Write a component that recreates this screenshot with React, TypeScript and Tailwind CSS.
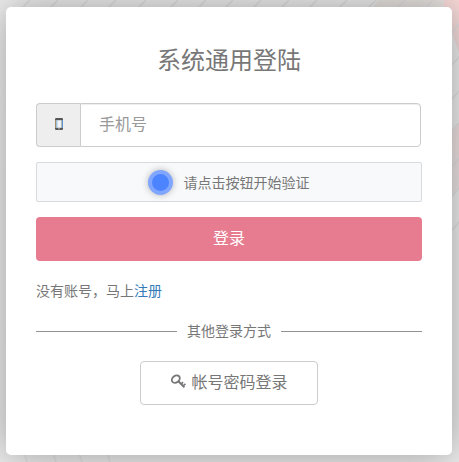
import { useState } from 'react';
import type { FormEvent } from 'react';

function PhoneIcon() {
  return (
    <svg width="8" height="12" viewBox="0 0 8 12" aria-hidden="true">
      <rect x="0" y="0" width="8" height="12" rx="1.2" fill="#555555" />
      <rect x="0" y="2" width="1.2" height="8" fill="#a58a68" />
      <rect x="6.8" y="2" width="1.2" height="8" fill="#5a94c8" />
      <rect x="1.4" y="2.2" width="5.2" height="7.6" fill="#f1f3f5" />
      <rect x="1.4" y="2.2" width="1" height="7.6" fill="#8fc6f0" />
      <rect x="3.2" y="10.4" width="1.6" height="0.9" fill="#cccccc" />
    </svg>
  );
}

function KeyIcon() {
  return (
    <svg width="16" height="15" viewBox="0 0 16 15" fill="none" stroke="#777777" aria-hidden="true">
      <ellipse cx="5.8" cy="5.1" rx="4.3" ry="3.3" transform="rotate(-38 5.8 5.1)" strokeWidth="1.9" />
      <path d="M8.4 7.3L14.4 13.4" strokeWidth="2" />
      <path d="M13 12L15.4 9.8M11 10.2L13.1 8.2" strokeWidth="1.6" />
    </svg>
  );
}

// Diagonal pattern behind the card
function Backdrop() {
  return (
    <svg
      className="absolute inset-0 h-full w-full"
      viewBox="0 0 459 462"
      preserveAspectRatio="none"
      aria-hidden="true"
    >
      <defs>
        <linearGradient id="tone" x1="0" y1="0" x2="0" y2="1">
          <stop offset="0" stopColor="#efefef" />
          <stop offset="1" stopColor="#ececec" />
        </linearGradient>
        <linearGradient id="rose" x1="0" y1="0" x2="0" y2="1">
          <stop offset="0" stopColor="#fbdcda" />
          <stop offset="1" stopColor="#f0dedd" />
        </linearGradient>
        <linearGradient id="blush" x1="0" y1="0" x2="0" y2="1">
          <stop offset="0" stopColor="#efe1e1" />
          <stop offset="1" stopColor="#ebe5e5" />
        </linearGradient>
      </defs>
      <rect width="459" height="462" fill="url(#tone)" />
      <path d="M378 0H446V7H373Z" fill="#ebe6e3" />
      <path d="M444 0H459V53L452 33L444 7Z" fill="url(#rose)" />
      <path d="M452 132L459 123V188L452 195Z" fill="url(#blush)" />
      <g stroke="#e2e0e0" strokeWidth="1.5">
        <path d="M30 0L20 10M58 0L48 10M88 0L78 10M116 0L106 10M146 0L136 10M178 0L168 10M206 0L196 10M233 0L223 10M261 0L251 10M289 0L279 10M317 0L307 10M347 0L337 10M376 0L366 10M405 0L395 10M433 0L423 10" />
        <path d="M450 35L459 24M450 67L459 57M450 101L459 91M450 132L459 123M450 169L459 158M450 199L459 188M450 233L459 222" />
        <path d="M24 453L27 462M53 453L56 462M79 453L82 462M107 453L110 462" />
      </g>
    </svg>
  );
}

export default function App() {
  const [phone, setPhone] = useState('');

  const handleSubmit = (e: FormEvent) => {
    e.preventDefault();
  };

  return (
    <div className="relative h-[462px] w-[459px] overflow-hidden bg-[#eeeeee] pt-[7px] pl-[6px] font-['Noto_Sans_CJK_SC',sans-serif] text-sm text-[#777777]">
      <Backdrop />

      <main className="relative h-[448px] w-[446px] rounded-[5px] bg-white px-[30px] pt-[35px] shadow-[0_0_40px_rgba(0,0,0,0.35)]">
        <h1 className="mb-[27px] text-center text-2xl leading-[34px] font-normal text-[#777777]">系统通用登陆</h1>

        <form onSubmit={handleSubmit}>
          {/* Phone number */}
          <div className="mr-px flex h-11">
            <label
              htmlFor="phone"
              className="flex w-11 shrink-0 items-center justify-center rounded-l border border-r-0 border-[#cccccc] bg-[#eeeeee] pb-0.5"
            >
              <PhoneIcon />
            </label>
            <input
              id="phone"
              type="tel"
              value={phone}
              onChange={(e) => setPhone(e.target.value)}
              placeholder="手机号"
              className="min-w-0 flex-1 rounded-r border border-[#cccccc] bg-white px-[18px] pb-1 text-base shadow-[inset_0_1px_1px_rgba(0,0,0,0.075)] outline-none placeholder:text-[#999999]"
            />
          </div>

          {/* Captcha trigger */}
          <button
            type="button"
            className="mt-[15px] flex h-10 w-full cursor-pointer items-center justify-center rounded-[2px] border border-[#d8dbde] bg-[#f7f9fb] text-sm"
          >
            <span className="mr-[11px] h-[25px] w-[25px] rounded-full border-4 border-[#80a6ff] bg-[#4c84ff] shadow-[0_0_7px_rgba(0,0,0,0.28)]" />
            <span>请点击按钮开始验证</span>
            <span className="w-px" />
          </button>

          <button
            type="submit"
            className="mt-[15px] flex h-11 w-full cursor-pointer items-center justify-center rounded bg-[#e77c91] pb-[5px] text-base text-white"
          >
            登录
          </button>
        </form>

        <p className="mt-[19px] leading-5">
          没有账号，马上
          <a href="#register" className="text-[#337ab7]">注册</a>
        </p>

        <div className="mt-[21px] flex h-5 items-center gap-2.5">
          <span className="h-px flex-1 bg-[#929292]" />
          <span className="pb-0.5 leading-5">其他登录方式</span>
          <span className="h-px flex-1 bg-[#929292]" />
        </div>

        <button
          type="button"
          className="mx-auto mt-5 flex h-11 w-[178px] cursor-pointer items-center justify-center gap-[5px] rounded border border-[#cccccc] bg-white pb-1 text-base"
        >
          <KeyIcon />
          <span>帐号密码登录</span>
        </button>
      </main>
    </div>
  );
}
